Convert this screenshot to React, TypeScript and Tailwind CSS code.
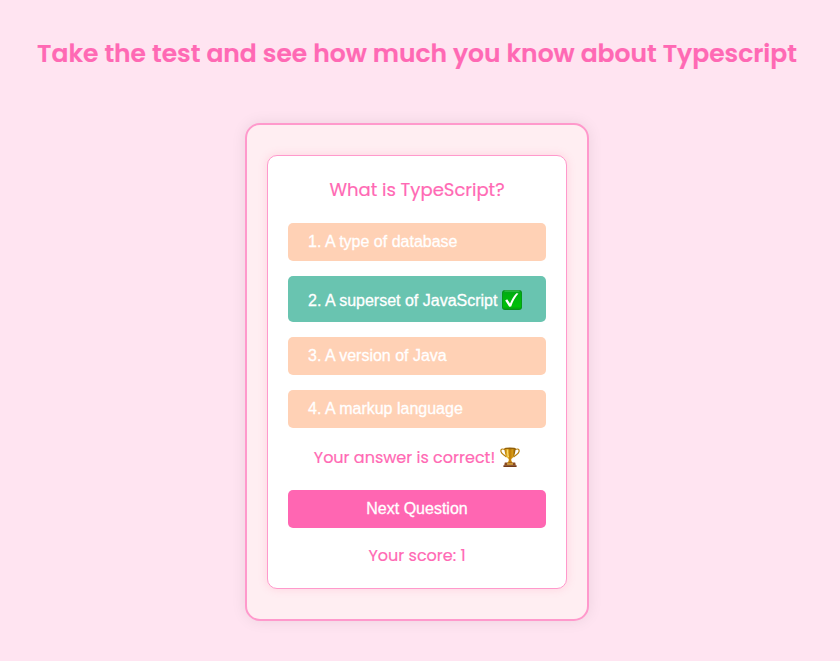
import { useState } from "react";

const options = [
  "A type of database",
  "A superset of JavaScript",
  "A version of Java",
  "A markup language",
];

const CORRECT = 1;

function CheckMark() {
  return (
    <svg className="-mt-0.5 ml-[5px] block h-5 w-5 shrink-0" viewBox="0 0 20 20" role="img" aria-label="Correct">
      <defs>
        <linearGradient id="check-fill" x1="0" y1="0" x2="0" y2="1">
          <stop offset="0" stopColor="#05a51b" />
          <stop offset="0.2" stopColor="#00b010" />
          <stop offset="0.85" stopColor="#00bf08" />
          <stop offset="1" stopColor="#079a12" />
        </linearGradient>
      </defs>
      <rect x="0" y="0" width="20" height="20" rx="3" fill="#078e1c" />
      <rect x="0.7" y="1" width="18.6" height="18.3" rx="2.5" fill="url(#check-fill)" />
      <path d="M2.5 1H17.5" stroke="#5bd06c" strokeWidth="0.8" />
      <path d="M3.2 10.4L5.2 9.3L8 13.6C9.6 9.4 11.6 6 14.4 3.2L16.4 3.6C13 7.4 11 11.4 9.2 16.5L7.2 16.8Z" fill="#fff" />
    </svg>
  );
}

function Trophy() {
  return (
    <svg className="ml-[5px] block h-5 w-5 shrink-0" viewBox="0 0 20 20" role="img" aria-label="Trophy">
      <defs>
        <linearGradient id="cup-gold" x1="0" y1="0" x2="1" y2="0">
          <stop offset="0" stopColor="#a66a00" />
          <stop offset="0.28" stopColor="#f5c537" />
          <stop offset="0.48" stopColor="#bd7a06" />
          <stop offset="0.72" stopColor="#d79a15" />
          <stop offset="1" stopColor="#805000" />
        </linearGradient>
      </defs>
      <path d="M5 2.6C1.8 1.2 .5 2.4 1 4.7C1.5 7.4 4.3 7.4 6.5 10.2M15 2.6C18.2 1.2 19.5 2.4 19 4.7C18.5 7.4 15.7 7.4 13.5 10.2" fill="none" stroke="#b9800e" strokeWidth="1.2" />
      <path d="M4.5 1H15.5C15.4 6.5 14.2 10.4 11.3 11.9V13.5L12.6 16H7.4L8.7 13.5V11.9C5.8 10.4 4.6 6.5 4.5 1Z" fill="url(#cup-gold)" />
      <ellipse cx="10" cy="1.3" rx="5.5" ry="0.9" fill="#936009" />
      <path d="M7.5 3.2C7.5 6 7.9 8.3 8.7 10" fill="none" stroke="#ffe17b" strokeWidth="0.8" />
      <path d="M4.8 15.5H15.2L15.8 18.5H4.2Z" fill="#8b4b20" />
      <path d="M7 16.1H13V17.8H7Z" fill="#d5a33b" />
      <path d="M3.4 18.3H16.6V20H3.4Z" fill="#753b17" />
    </svg>
  );
}

export default function App() {
  const [score] = useState(1);

  return (
    <main className="flex min-h-screen flex-col items-center bg-[#ffe4f1] pr-1.5 font-[Poppins,Inter,sans-serif] text-[#ff69b4] [-webkit-text-stroke:0.2px_currentColor]">
      <h1 className="mt-[34px] h-[39px] whitespace-nowrap text-center text-[25px] leading-[39px] font-semibold">
        Take the test and see how much you know about Typescript
      </h1>
      <section className="mt-[50px] w-[344px] rounded-[15px] border-2 border-[#ff99cc] bg-[#ffeef2] px-5 py-[30px] shadow-[0_0_15px_rgba(0,0,0,0.08)]">
        <div className="flex h-[434px] flex-col rounded-[10px] border border-[#ff99cc] bg-white px-5 shadow-[0_0_10px_rgba(255,105,150,0.2)]">
          <h2 className="mt-5 h-[27px] text-center text-[18px] leading-[27px] font-normal">
            What is TypeScript?
          </h2>
          <div className="mt-5 flex flex-col gap-[15px] font-['Liberation_Sans',Arial,sans-serif] text-base text-white [-webkit-text-stroke:0.3px_currentColor]">
            {options.map((option, i) => (
              <button
                key={option}
                className={
                  i === CORRECT
                    ? "flex h-[46px] items-center rounded-[5px] bg-[#69c4b0] px-5 pt-[3px]"
                    : "flex h-[38px] items-center rounded-[5px] bg-[#ffd1b5] px-5"
                }
              >
                <span className="whitespace-nowrap">{i + 1}. {option}</span>
                {i === CORRECT && <CheckMark />}
              </button>
            ))}
          </div>
          <p className="mt-[17px] flex h-6 items-center justify-center whitespace-nowrap text-base leading-6">
            <span className="pt-0.5">Your answer is correct!</span>
            <Trophy />
          </p>
          <button className="mt-[21px] h-[38px] shrink-0 rounded-[5px] bg-[#ff66b2] font-['Liberation_Sans',Arial,sans-serif] text-base text-white [-webkit-text-stroke:0.3px_white]">
            Next Question
          </button>
          <p className="mt-4 h-6 text-center text-base leading-6">Your score: {score}</p>
        </div>
      </section>
    </main>
  );
}
